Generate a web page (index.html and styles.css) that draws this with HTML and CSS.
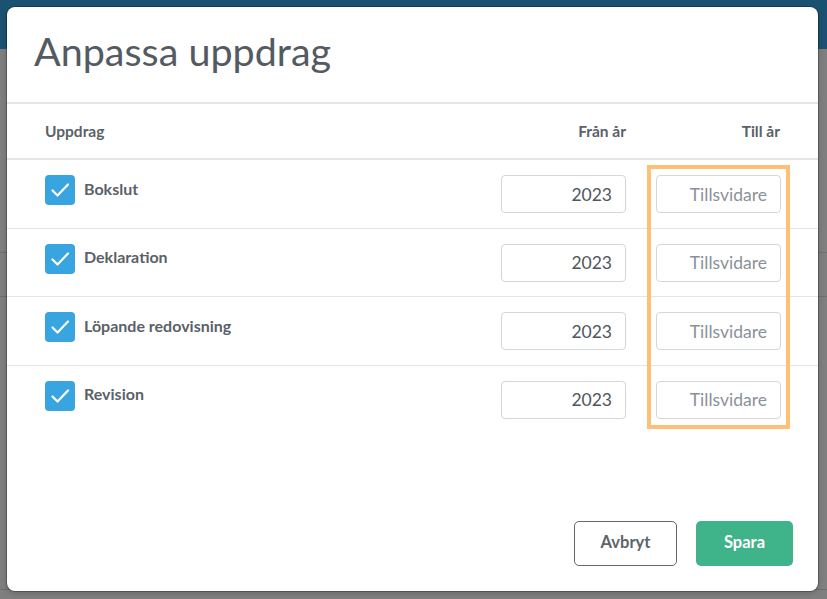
FILE: index.html
```html
<!DOCTYPE html>
<html lang="sv">
<head>
<meta charset="utf-8">
<title>Anpassa uppdrag</title>
<link rel="stylesheet" href="styles.css">
</head>
<body>
<div class="backdrop">
  <div class="topbar"></div>
  <div class="page-lines">
    <div class="pl pl1"></div>
    <div class="pl pl2"></div>
    <div class="pl pl3"></div>
  </div>
</div>

<div class="modal">
  <div class="modal-header">
    <h1 class="title">Anpassa uppdrag</h1>
  </div>

  <div class="table">
    <div class="thead">
      <div class="col-name">Uppdrag</div>
      <div class="col-from">Från år</div>
      <div class="col-to">Till år</div>
    </div>

    <div class="row">
      <div class="col-name">
        <span class="check"><svg viewBox="0 0 30 30" width="30" height="30"><path d="M7.5 15.5 L12.5 20.5 L23 9.5" fill="none" stroke="#fff" stroke-width="2.2" stroke-linecap="round" stroke-linejoin="round"/></svg></span>
        <span class="label">Bokslut</span>
      </div>
      <div class="col-from"><input class="field" type="text" value="2023"></div>
      <div class="col-to"><input class="field" type="text" placeholder="Tillsvidare"></div>
    </div>

    <div class="row">
      <div class="col-name">
        <span class="check"><svg viewBox="0 0 30 30" width="30" height="30"><path d="M7.5 15.5 L12.5 20.5 L23 9.5" fill="none" stroke="#fff" stroke-width="2.2" stroke-linecap="round" stroke-linejoin="round"/></svg></span>
        <span class="label">Deklaration</span>
      </div>
      <div class="col-from"><input class="field" type="text" value="2023"></div>
      <div class="col-to"><input class="field" type="text" placeholder="Tillsvidare"></div>
    </div>

    <div class="row">
      <div class="col-name">
        <span class="check"><svg viewBox="0 0 30 30" width="30" height="30"><path d="M7.5 15.5 L12.5 20.5 L23 9.5" fill="none" stroke="#fff" stroke-width="2.2" stroke-linecap="round" stroke-linejoin="round"/></svg></span>
        <span class="label">Löpande redovisning</span>
      </div>
      <div class="col-from"><input class="field" type="text" value="2023"></div>
      <div class="col-to"><input class="field" type="text" placeholder="Tillsvidare"></div>
    </div>

    <div class="row last">
      <div class="col-name">
        <span class="check"><svg viewBox="0 0 30 30" width="30" height="30"><path d="M7.5 15.5 L12.5 20.5 L23 9.5" fill="none" stroke="#fff" stroke-width="2.2" stroke-linecap="round" stroke-linejoin="round"/></svg></span>
        <span class="label">Revision</span>
      </div>
      <div class="col-from"><input class="field" type="text" value="2023"></div>
      <div class="col-to"><input class="field" type="text" placeholder="Tillsvidare"></div>
    </div>
  </div>

  <div class="footer">
    <button class="btn btn-cancel" type="button">Avbryt</button>
    <button class="btn btn-save" type="button">Spara</button>
  </div>

  <div class="highlight"></div>
</div>
</body>
</html>
```

FILE: styles.css
```css
* { box-sizing: border-box; }

html, body {
  margin: 0;
  padding: 0;
  width: 827px;
  height: 599px;
  overflow: hidden;
}

body {
  font-family: Lato, "Open Sans", "Liberation Sans", sans-serif;
  background: #7f7f7f;
  position: relative;
}

.backdrop {
  position: absolute;
  inset: 0;
  display: flex;
  flex-direction: column;
}

.topbar {
  height: 49px;
  background: #1c5271;
  flex: none;
}

.page-lines {
  flex: 1;
  display: flex;
  flex-direction: column;
}

.pl { border-bottom: 1px solid #6f6f6f; }
.pl1 { height: 204px; }
.pl2 { height: 44px; }
.pl3 { height: 293px; }

.modal {
  position: absolute;
  left: 7px;
  top: 7px;
  width: 811px;
  height: 584px;
  background: #fff;
  border-radius: 8px;
  box-shadow: 0 0 0 1px rgba(0,0,0,0.25), 0 2px 6px rgba(0,0,0,0.2);
  display: flex;
  flex-direction: column;
}

.modal-header {
  height: 97px;
  border-bottom: 2px solid #e3e6e9;
  padding: 0 27px;
  display: flex;
  align-items: center;
}

.title {
  margin: 0;
  font-size: 39.5px;
  font-weight: 400;
  color: #535a61;
  position: relative;
  top: -4px;
}

.table {
  padding: 0 37px 0 38px;
}

.thead {
  height: 56px;
  display: flex;
  align-items: center;
  margin: 0 -37px 0 -38px;
  padding: 0 37px 0 38px;
  border-bottom: 2px solid #e3e6e9;
  font-size: 15.5px;
  font-weight: 700;
  color: #5a6168;
}

.col-name {
  flex: 1;
  display: flex;
  align-items: center;
}

.col-from {
  width: 125px;
  text-align: right;
}

.col-to {
  width: 125px;
  margin-left: 30px;
  text-align: right;
}

.thead .col-to { padding-right: 1px; }

.row {
  height: 68.5px;
  display: flex;
  align-items: flex-start;
  padding-top: 15px;
  margin: 0 -37px 0 -38px;
  padding-left: 38px;
  padding-right: 37px;
  border-bottom: 1px solid #e3e6e9;
}

.row.last { border-bottom: none; }

.check {
  width: 30px;
  height: 30px;
  border-radius: 4px;
  background: #38a4e0;
  display: inline-flex;
  flex: none;
}

.label {
  margin-left: 9px;
  font-size: 16px;
  font-weight: 700;
  color: #5a6168;
  position: relative;
  top: -2px;
}

.field {
  width: 125px;
  height: 38px;
  border: 1px solid #d3d6da;
  border-radius: 4px;
  padding: 0 13px;
  text-align: right;
  font-family: Lato, "Open Sans", "Liberation Sans", sans-serif;
  font-size: 17.5px;
  color: #4f565d;
  background: #fff;
  outline: none;
}

.field::placeholder {
  color: #8a9199;
  opacity: 1;
}

.footer {
  margin-top: auto;
  display: flex;
  justify-content: flex-end;
  gap: 19px;
  padding: 0 25px 25px 0;
}

.btn {
  height: 45px;
  border-radius: 5px;
  font-family: Lato, "Open Sans", "Liberation Sans", sans-serif;
  font-size: 16.5px;
  font-weight: 700;
  cursor: pointer;
  padding: 0 0 3px;
}

.btn-cancel {
  width: 103px;
  background: #fff;
  border: 1px solid #62686e;
  color: #5d646b;
}

.btn-save {
  width: 97px;
  background: #3fb38a;
  border: none;
  color: #fff;
}

.highlight {
  position: absolute;
  left: 640px;
  top: 158px;
  width: 143px;
  height: 264px;
  border: 4px solid #ffbf75;
  pointer-events: none;
}
```
